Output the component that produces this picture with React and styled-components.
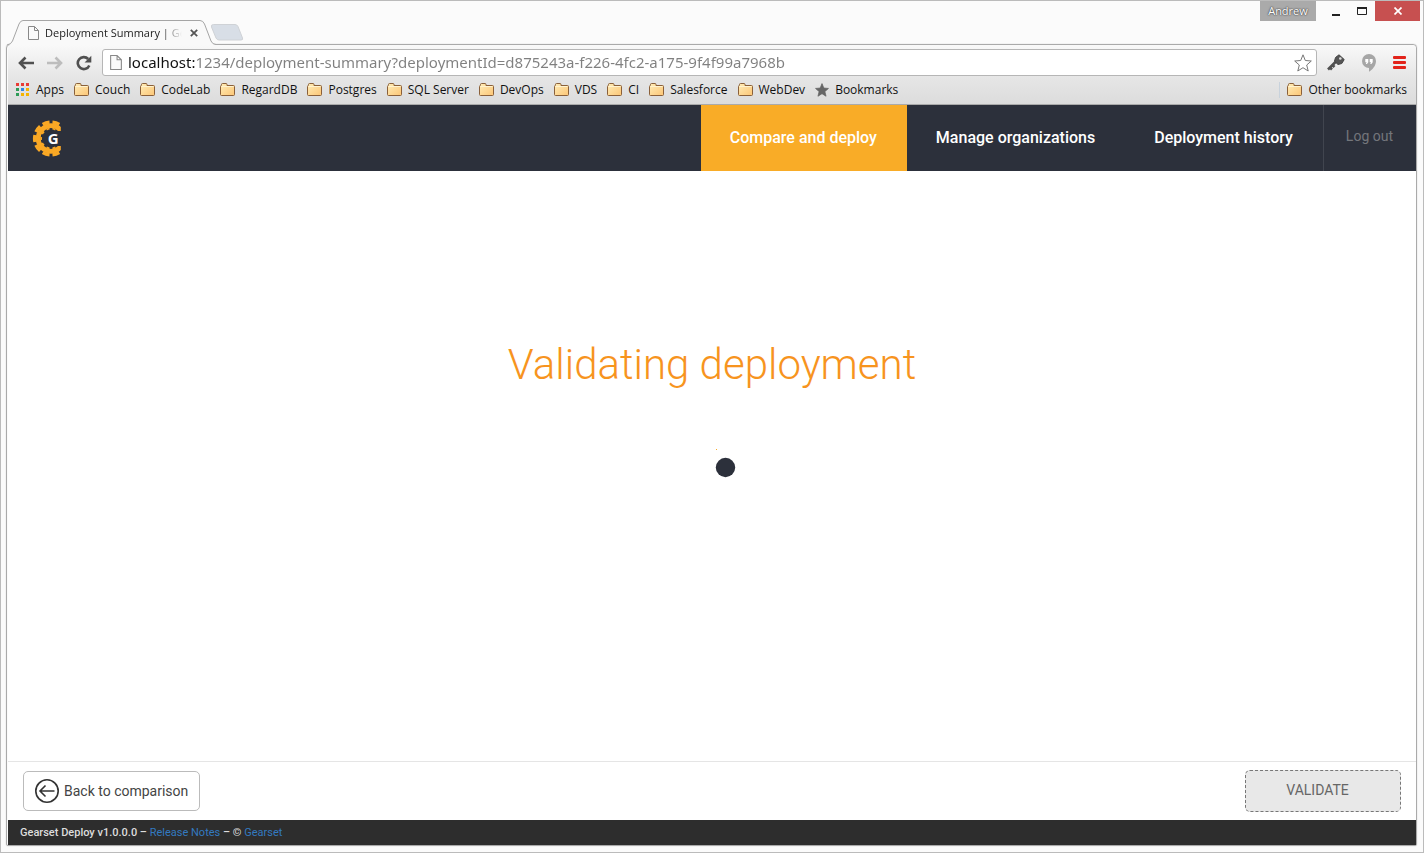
import React from "react";
import styled, { createGlobalStyle } from "styled-components";

const chromeFont = `"Open Sans", "Noto Sans", sans-serif`;

const GlobalStyle = createGlobalStyle`
  *, *::before, *::after { box-sizing: border-box; }
  body { margin: 0; background: #fbfbfb; font-family: Roboto, sans-serif; }
  button, input { font-family: inherit; }
  button { padding: 0; border: 0; background: none; }
  svg { display: block; flex: none; }
`;

const Window = styled.div`
  min-height: 100vh;
  display: flex;
  flex-direction: column;
  border: 1px solid #bbb;
  padding: 0 6px 6px 5px;
  background: #fbfbfb;
`;

const TitleBar = styled.div`
  display: flex;
  justify-content: space-between;
  height: 43px;
`;

const TabStrip = styled.div`
  display: flex;
  align-items: flex-end;
`;

const Tab = styled.div`
  display: grid;
  grid-template-columns: minmax(0, 1fr);
  width: 212px;
  height: 25px;
  margin-bottom: -1px;
  z-index: 1;
  > * { grid-area: 1 / 1; }
`;

const TabContent = styled.div`
  display: flex;
  align-items: center;
  padding: 0 20px 0 22px;
  gap: 6px;
  z-index: 1;
`;

const TabTitle = styled.span`
  flex: 1;
  overflow: hidden;
  margin-right: 2px;
  white-space: nowrap;
  font: 11px/16px ${chromeFont};
  color: #222;
  mask-image: linear-gradient(90deg, #000 85%, transparent);
`;

const PlainButton = styled.button`
  display: flex;
  align-items: center;
  justify-content: center;
`;

const NewTab = styled(PlainButton)`
  margin: 0 0 3px -8px;
`;

const WindowControls = styled.div`
  display: flex;
  align-items: flex-start;
  margin-right: -3px;
`;

const UserBadge = styled.button`
  width: 56px;
  height: 20px;
  margin-right: 7px;
  background: #aaa;
  color: #fff;
  font: 11px/20px ${chromeFont};
  text-shadow: 0 0 2px #333, 0 0 1px #444;
`;

const WindowButton = styled(PlainButton)`
  width: ${(p) => (p.$close ? 45 : 26)}px;
  height: 20px;
  background: ${(p) => (p.$close ? "#c75050" : "transparent")};
`;

const Frame = styled.div`
  flex: 1;
  display: flex;
  flex-direction: column;
  border: 1px solid #aaa;
  border-radius: 4px 4px 2px 2px;
  box-shadow: 0 0 1px #aaa;
  padding-left: 1px;
`;

const BrowserBars = styled.div`
  background: linear-gradient(#f9f9f9, #e6e6e6 32px, #dcdcdc);
  border-bottom: 1px solid #aaa;
  border-radius: 4px 4px 0 0;
`;

const Toolbar = styled.div`
  display: flex;
  align-items: center;
  height: 32px;
  padding: 3px 10px 0 10px;
`;

const NavButtons = styled.div`
  display: flex;
  gap: 13px;
  margin-right: 10px;
`;

const AddressBar = styled.label`
  flex: 1;
  display: flex;
  align-items: center;
  height: 27px;
  padding: 0 4px 0 7px;
  gap: 6px;
  background: #fff;
  border: 1px solid #b6b6b6;
  border-radius: 3px;
`;

const AddressInput = styled.input`
  flex: 1;
  min-width: 0;
  height: 24px;
  padding: 0 0 2px;
  border: 0;
  outline: 0;
  font: 15px/22px "Noto Sans", sans-serif;
  color: #808080;
  -webkit-text-fill-color: transparent;
  background: linear-gradient(90deg, #111 67px, #808080 67px);
  background-clip: text;
`;

const ToolbarActions = styled.div`
  display: flex;
  align-items: center;
  gap: 17px;
  margin-left: 10px;
`;

const BookmarksBar = styled.nav`
  display: flex;
  align-items: center;
  justify-content: space-between;
  height: 27px;
  padding: 0 9px 2px 8px;
`;

const BookmarkList = styled.div`
  display: flex;
  gap: 10px;
`;

const Bookmark = styled.a`
  display: flex;
  align-items: center;
  gap: 6px;
  font: 12px/16px ${chromeFont};
  color: #111;
  text-decoration: none;
  white-space: nowrap;
`;

const OtherBookmarks = styled(Bookmark)`
  border-left: 1px solid #c8d2dc;
  padding-left: 7px;
`;

const SiteHeader = styled.header`
  display: flex;
  align-items: stretch;
  justify-content: space-between;
  height: 66px;
  background: #2c303b;
`;

const LogoLink = styled.a`
  display: flex;
  align-items: center;
  padding-left: 24px;
`;

const SiteNav = styled.nav`
  display: flex;
`;

const NavLink = styled.a`
  display: flex;
  align-items: center;
  padding: 0 30px 2px 29px;
  background: ${(p) => (p.$active ? "#f9ac27" : "transparent")};
  color: #fff;
  font-size: 16px;
  font-weight: 500;
  text-decoration: none;
`;

const LogOut = styled.a`
  display: flex;
  align-items: center;
  padding: 0 23px 4px 22px;
  border-left: 1px solid #41454f;
  color: #74767b;
  font-size: 14px;
  text-decoration: none;
`;

const Main = styled.main`
  flex: 1;
  display: flex;
  flex-direction: column;
  align-items: center;
  padding-top: 169px;
  background: #fff;
`;

const Heading = styled.h1`
  margin: 0 0 55px;
  color: #f7941e;
  font-size: 42px;
  line-height: 50px;
  font-weight: 300;
`;

const ActionBar = styled.div`
  display: flex;
  align-items: center;
  justify-content: space-between;
  height: 59px;
  padding: 0 15px;
  border-top: 1px solid #e5e5e5;
  background: #fff;
`;

const BackButton = styled.button`
  display: flex;
  align-items: center;
  gap: 5px;
  height: 40px;
  padding: 0 11px;
  border: 1px solid #bbb;
  border-radius: 5px;
  background: #fff;
  color: #444;
  font-size: 14px;
`;

const ValidateButton = styled.button`
  width: 156px;
  height: 42px;
  padding: 0 11px 2px 0;
  border: 1px dashed #777;
  border-radius: 5px;
  background: #e8e8e8;
  color: #666;
  font-size: 14px;
`;

const Footer = styled.footer`
  height: 25px;
  padding-left: 12px;
  background: #2d2d2d;
  color: #ddd;
  font-size: 11px;
  line-height: 25px;
  font-weight: 500;
`;

const FooterLink = styled.a`
  color: #337ac0;
  font-weight: 400;
  text-decoration: none;
`;

const PageIcon = ({ width = 11, height = 14 }) => (
  <svg width={width} height={height} viewBox="0 0 11 14" fill="#fafafa" stroke="#888">
    <path d="M.5.5h6l4 4v9H.5zM6.500.5v4h4" />
  </svg>
);

const FolderIcon = () => (
  <svg width="15" height="14" viewBox="0 0 15 14">
    <defs>
      <linearGradient id="folder" x1="0" y1="0" x2="1" y2="1">
        <stop offset="0" stopColor="#ffedb8" />
        <stop offset="1" stopColor="#fcc676" />
      </linearGradient>
    </defs>
    <path d="M.5 11.500V3.500q0-1 1-1.200V1.500q0-1 1-1h3.500q1 0 1 1v1h6.500q1 0 1 1v8q0 1-1 1h-12q-1 0-1-1z" fill="url(#folder)" stroke="#8a603a" />
    <path d="M1.500 3.500h12" stroke="#fff3cf" />
  </svg>
);

const appColors = ["#e93b35", "#e93b35", "#e93b35", "#2e9b57", "#2f87e6", "#f5b400", "#2e9b57", "#f5b400", "#f5b400"];

const AppsIcon = () => (
  <svg width="14" height="14" viewBox="0 0 14 14">
    {appColors.map((fill, i) => (
      <rect key={i} x={(i % 3) * 5} y={Math.floor(i / 3) * 5} width="3" height="3" fill={fill} />
    ))}
  </svg>
);

const StarIcon = ({ size, fill, stroke }) => (
  <svg width={size} height={size} viewBox="0 0 18 18" fill={fill} stroke={stroke} strokeLinejoin="round">
    <path d="M9 .8l2.300 5.700 6 .5-4.600 4 1.500 6L9 13.700 3.800 17l1.500-6-4.600-4 6-.5z" />
  </svg>
);

const ArrowIcon = ({ flip, color }) => (
  <svg width="16" height="14" viewBox="0 0 16 14" fill="none" stroke={color} strokeWidth="2.600">
    <path d={flip ? "M0 7h14M8.500 1.500l5.500 5.500-5.500 5.500" : "M16 7H2M7.500 1.500L2 7l5.500 5.500"} />
  </svg>
);

const ReloadIcon = () => (
  <svg width="16" height="16" viewBox="0 0 16 16">
    <path d="M13.300 10.500A6 6 0 1 1 12.200 4" fill="none" stroke="#505050" strokeWidth="2.600" />
    <path d="M15.300.8v6.700H8.600z" fill="#505050" />
  </svg>
);

const KeyIcon = () => (
  <svg width="18" height="18" viewBox="0 0 18 18">
    <path d="M1 15.500L9.500 7M3 13.500l2 2M5.500 11l2 2" stroke="#505050" strokeWidth="2.600" fill="none" />
    <path d="M8.500 3.500L12 .8l5.200 4.700-2.400 4-3.800 1-3.500-3.300z" fill="#555" stroke="#444" />
    <circle cx="13.300" cy="4.500" r="1.300" fill="#ddd" />
  </svg>
);

const HangoutsIcon = () => (
  <svg width="14" height="18" viewBox="0 0 14 18">
    <path d="M7 0a7 7 0 0 1 7 7c0 5-4 9-7 10.800V14A7 7 0 1 1 7 0z" fill="#a6a6a6" />
    <path d="M3.300 5h3v3.200L5 10H3.800l.8-1.800H3.300zM7.700 5h3v3.200L9.400 10H8.200L9 8.200H7.700z" fill="#fff" />
  </svg>
);

const MenuIcon = () => (
  <svg width="13" height="13" viewBox="0 0 13 13" fill="#e2231a">
    <rect width="13" height="3" rx="1" />
    <rect y="5" width="13" height="3" rx="1" />
    <rect y="10" width="13" height="3" rx="1" />
  </svg>
);

const GearLogo = () => (
  <svg width="30" height="38" viewBox="0 0 30 38" role="img" aria-label="Gearset">
    <defs>
      <clipPath id="gearCut"><rect width="28.800" height="38" /></clipPath>
    </defs>
    <g clipPath="url(#gearCut)" fill="none" stroke="#f9a825">
      <circle cx="19" cy="19.500" r="12.800" strokeWidth="4.800" />
      <circle cx="19" cy="19.500" r="16.400" strokeWidth="3.400" pathLength="100" strokeDasharray="7 3" strokeDashoffset="3.500" />
      <circle cx="19" cy="19.500" r="9.900" strokeWidth="1.800" pathLength="100" strokeDasharray="5 5" strokeDashoffset="2.500" />
    </g>
    <rect x="15" y="12" width="15" height="15" fill="#2c303b" />
    <text x="15.700" y="25" fill="#fff" fontFamily="Open Sans, sans-serif" fontSize="15" fontWeight="700">G</text>
  </svg>
);

const bookmarks = ["Couch", "CodeLab", "RegardDB", "Postgres", "SQL Server", "DevOps", "VDS", "CI", "Salesforce", "WebDev"];

export default function App() {
  return (
    <>
      <GlobalStyle />
      <Window>
        <TitleBar>
          <TabStrip>
            <Tab>
              <svg width="212" height="25" viewBox="0 0 212 25">
                <path d="M1 25Q5 24.500 6.500 21L13 4Q14.500.5 17 .5H194Q197 .5 198.500 4L205 21Q206.500 24.500 210 24.500V25z" fill="#f9f9f9" />
                <path d="M1 25Q5 24.500 6.500 21L13 4Q14.500.5 17 .5H194Q197 .5 198.500 4L205 21Q206.500 24.500 210 24.500" fill="none" stroke="#a5a5a5" />
              </svg>
              <TabContent>
                <PageIcon />
                <TabTitle>Deployment Summary | Gearset</TabTitle>
                <PlainButton aria-label="Close tab">
                  <svg width="8" height="8" viewBox="0 0 8 8" stroke="#555" strokeWidth="1.800"><path d="M.8.8l6.400 6.400M7.200.8L.8 7.200" /></svg>
                </PlainButton>
              </TabContent>
            </Tab>
            <NewTab aria-label="New tab">
              <svg width="34" height="17" viewBox="0 0 34 17">
                <path d="M3.500.5H25q2 0 3 2l4.500 11.500q.8 2-1.500 2H9q-2 0-3-2L1.500 3Q.8.5 3.500.5z" fill="#d8dee6" stroke="#cfd2d6" />
              </svg>
            </NewTab>
          </TabStrip>
          <WindowControls>
            <UserBadge>Andrew</UserBadge>
            <WindowButton aria-label="Minimize">
              <svg width="8" height="14" viewBox="0 0 8 14"><path d="M0 11h8" stroke="#222" strokeWidth="2" /></svg>
            </WindowButton>
            <WindowButton aria-label="Maximize">
              <svg width="10" height="8" viewBox="0 0 10 8"><path d="M0 1h10" stroke="#222" strokeWidth="2" /><path d="M.5 1v6.500h9V1" fill="none" stroke="#222" /></svg>
            </WindowButton>
            <WindowButton $close aria-label="Close">
              <svg width="8" height="8" viewBox="0 0 8 8" stroke="#fff" strokeWidth="1.700"><path d="M.5.5l7 7M7.500.5l-7 7" /></svg>
            </WindowButton>
          </WindowControls>
        </TitleBar>
        <Frame>
          <BrowserBars>
            <Toolbar>
              <NavButtons>
                <PlainButton aria-label="Back"><ArrowIcon color="#505050" /></PlainButton>
                <PlainButton aria-label="Forward"><ArrowIcon flip color="#bdbdbd" /></PlainButton>
                <PlainButton aria-label="Reload"><ReloadIcon /></PlainButton>
              </NavButtons>
              <AddressBar>
                <PageIcon width={12} height={15} />
                <AddressInput aria-label="Address" defaultValue="localhost:1234/deployment-summary?deploymentId=d875243a-f226-4fc2-a175-9f4f99a7968b" />
                <StarIcon size={18} fill="#fff" stroke="#777" />
              </AddressBar>
              <ToolbarActions>
                <PlainButton aria-label="Passwords"><KeyIcon /></PlainButton>
                <PlainButton aria-label="Hangouts"><HangoutsIcon /></PlainButton>
                <PlainButton aria-label="Menu"><MenuIcon /></PlainButton>
              </ToolbarActions>
            </Toolbar>
            <BookmarksBar>
              <BookmarkList>
                <Bookmark href="#"><AppsIcon />Apps</Bookmark>
                {bookmarks.map((name) => (
                  <Bookmark key={name} href="#"><FolderIcon />{name}</Bookmark>
                ))}
                <Bookmark href="#"><StarIcon size={14} fill="#666" stroke="#666" />Bookmarks</Bookmark>
              </BookmarkList>
              <OtherBookmarks href="#"><FolderIcon />Other bookmarks</OtherBookmarks>
            </BookmarksBar>
          </BrowserBars>
          <SiteHeader>
            <LogoLink href="#"><GearLogo /></LogoLink>
            <SiteNav>
              <NavLink href="#" $active>Compare and deploy</NavLink>
              <NavLink href="#">Manage organizations</NavLink>
              <NavLink href="#">Deployment history</NavLink>
              <LogOut href="#">Log out</LogOut>
            </SiteNav>
          </SiteHeader>
          <Main>
            <Heading>Validating deployment</Heading>
            <svg width="64" height="64" viewBox="0 0 64 64" role="img" aria-label="Loading">
              <circle cx="45.500" cy="22.500" r="9.700" fill="#2c303b" />
              <rect x="36" y="4" width="1" height="1" fill="#f9ac27" />
            </svg>
          </Main>
          <ActionBar>
            <BackButton>
              <svg width="24" height="24" viewBox="0 0 24 24" fill="none" stroke="#333" strokeWidth="1.600">
                <circle cx="12" cy="12" r="11.200" />
                <path d="M19.500 12H5M10.500 6.500L5 12l5.500 5.500" />
              </svg>
              Back to comparison
            </BackButton>
            <ValidateButton>VALIDATE</ValidateButton>
          </ActionBar>
          <Footer>
            Gearset Deploy v1.0.0.0 – <FooterLink href="#">Release Notes</FooterLink> – © <FooterLink href="#">Gearset</FooterLink>
          </Footer>
        </Frame>
      </Window>
    </>
  );
}
